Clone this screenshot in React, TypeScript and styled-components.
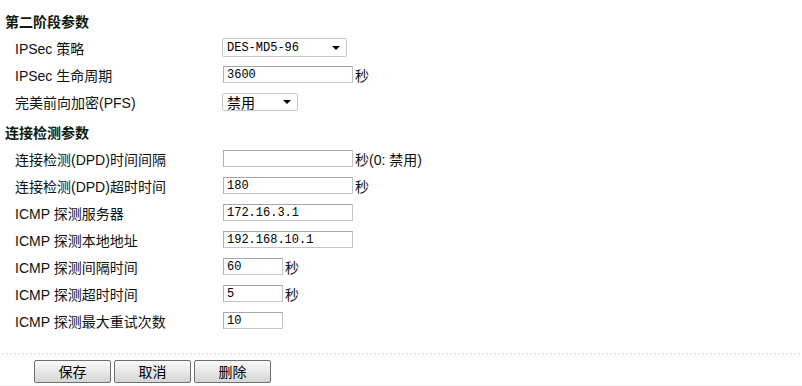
import React from "react";
import styled, { createGlobalStyle } from "styled-components";

const GlobalStyle = createGlobalStyle`
  html, body {
    margin: 0;
    padding: 0;
    background: #fff;
  }
  body {
    font-family: "Liberation Sans", "Noto Sans CJK SC", sans-serif;
    font-size: 14px;
    color: #000;
  }
`;

const Page = styled.div`
  width: 802px;
  height: 386px;
  padding-top: 8px;
  box-sizing: border-box;
  display: flex;
  flex-direction: column;
  border-bottom: 1px solid #f2f2f2;
`;

const SectionTitle = styled.div<{ $gap?: number }>`
  height: 26px;
  margin-top: ${(p) => p.$gap || 0}px;
  padding-left: 5px;
  display: flex;
  align-items: center;
  font-weight: bold;
  font-size: 14px;
  color: #0d1a0d;
`;

const Row = styled.div`
  height: 27px;
  display: flex;
  align-items: center;
`;

const Label = styled.div`
  width: 207px;
  padding-left: 15px;
  color: #111;
  white-space: nowrap;
`;

const TextBox = styled.div<{ $w: number }>`
  width: ${(p) => p.$w}px;
  height: 17px;
  box-sizing: border-box;
  margin-left: 1px;
  border: 1px solid #c4c4c4;
  border-top-color: #a8a8a8;
  border-left-color: #b0b0b0;
  display: flex;
  align-items: center;
  padding-left: 3px;
  font-family: "Liberation Mono", monospace;
  font-size: 12px;
`;

const Unit = styled.span`
  margin-left: 2px;
  color: #111;
`;

const Select = styled.div<{ $w: number; $h: number }>`
  width: ${(p) => p.$w}px;
  height: ${(p) => p.$h}px;
  box-sizing: border-box;
  border: 1px solid #c8c8c8;
  border-radius: 2px;
  display: flex;
  align-items: center;
  justify-content: space-between;
  padding: 0 6px 0 4px;
  font-size: 14px;
`;

const MonoValue = styled.span`
  font-family: "Liberation Mono", monospace;
  font-size: 12px;
`;

const Arrow = styled.span`
  width: 0;
  height: 0;
  border-left: 4px solid transparent;
  border-right: 4px solid transparent;
  border-top: 4px solid #000;
`;

const Divider = styled.div`
  margin: 19px 0 0 2px;
  height: 2px;
  background: repeating-linear-gradient(to right, #e8e8e8 0 2px, transparent 2px 4px);
`;

const ButtonBar = styled.div`
  display: flex;
  gap: 3px;
  padding-left: 34px;
  margin-top: 5px;
`;

const Button = styled.button`
  width: 77px;
  height: 23px;
  box-sizing: border-box;
  border: 1px solid #6e6e6e;
  border-radius: 2px;
  background: linear-gradient(#fafafa, #e8e8e8 50%, #d6d6d6);
  font-family: "Noto Sans CJK SC", sans-serif;
  font-size: 14px;
  color: #000;
  padding: 0;
  line-height: 21px;
`;

type Field = { label: string; value: string; width: number; unit?: string; mono?: boolean };

const dpdFields: Field[] = [
  { label: "连接检测(DPD)时间间隔", value: "", width: 130, unit: "秒(0: 禁用)" },
  { label: "连接检测(DPD)超时时间", value: "180", width: 130, unit: "秒" },
  { label: "ICMP 探测服务器", value: "172.16.3.1", width: 130 },
  { label: "ICMP 探测本地地址", value: "192.168.10.1", width: 130 },
  { label: "ICMP 探测间隔时间", value: "60", width: 60, unit: "秒" },
  { label: "ICMP 探测超时时间", value: "5", width: 60, unit: "秒" },
  { label: "ICMP 探测最大重试次数", value: "10", width: 60 },
];

const App = () => {
  return (
    <Page>
      <GlobalStyle />
      <SectionTitle>第二阶段参数</SectionTitle>
      <Row>
        <Label>IPSec 策略</Label>
        <Select $w={125} $h={19}>
          <MonoValue>DES-MD5-96</MonoValue>
          <Arrow />
        </Select>
      </Row>
      <Row>
        <Label>IPSec 生命周期</Label>
        <TextBox $w={130}>3600</TextBox>
        <Unit>秒</Unit>
      </Row>
      <Row>
        <Label>完美前向加密(PFS)</Label>
        <Select $w={76} $h={18}>
          <span>禁用</span>
          <Arrow />
        </Select>
      </Row>

      <SectionTitle $gap={4}>连接检测参数</SectionTitle>
      {dpdFields.map((f) => (
        <Row key={f.label}>
          <Label>{f.label}</Label>
          <TextBox $w={f.width}>{f.value}</TextBox>
          {f.unit && <Unit>{f.unit}</Unit>}
        </Row>
      ))}

      <Divider />
      <ButtonBar>
        <Button>保存</Button>
        <Button>取消</Button>
        <Button>删除</Button>
      </ButtonBar>
    </Page>
  );
};

export default App;
